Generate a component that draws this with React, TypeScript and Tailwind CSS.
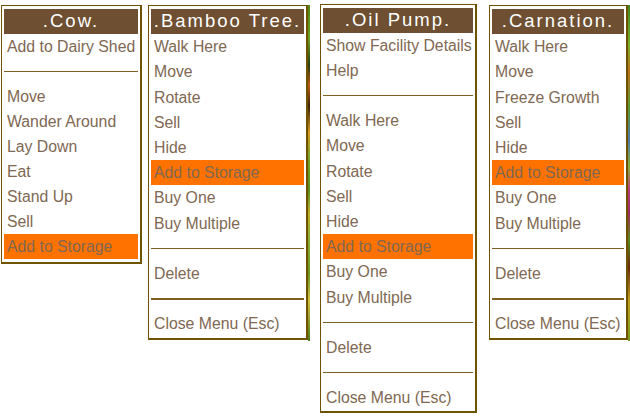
import React from "react";

type Item = { t: string; kind?: "item" | "sep" | "thick"; hi?: boolean; h?: number };

const I = (t: string, hi = false, h = 25): Item => ({ t, hi, kind: "item", h });
const S: Item = { t: "", kind: "sep" };
const T: Item = { t: "", kind: "thick" };

function Panel({
  title,
  items,
  className,
}: {
  title: string;
  items: Item[];
  className: string;
}) {
  return (
    <div
      className={
        "bg-white border-[#6f5300] border-t border-l border-r-2 border-b-2 px-[2px] pt-[3px] " +
        className
      }
    >
      <div className="h-[25px] bg-[#6e4f31] flex items-center justify-center text-white text-[18.5px] tracking-[2px] leading-none whitespace-nowrap [font-family:'Liberation_Sans',Arial,sans-serif]">
        {title}
      </div>
      {items.map((it, i) =>
        it.kind === "sep" ? (
          <div key={i} className="h-[25px] flex items-center">
            <div className="h-px w-full bg-[#7f5f22]" />
          </div>
        ) : it.kind === "thick" ? (
          <div key={i} className="h-[25px] flex items-center">
            <div className="h-[2px] w-full bg-[#7f5f22]" />
          </div>
        ) : (
          <div
            key={i}
            className={
              (it.h === 26 ? "h-[26px] " : "h-[25px] ") +
              "flex items-center pl-[3px] text-[15.8px] leading-none whitespace-nowrap text-[#806852] [font-family:'Liberation_Sans',Arial,sans-serif] " +
              (it.hi ? "bg-[#ff7200]" : "")
            }
          >
            {it.t}
          </div>
        )
      )}
    </div>
  );
}

function Strip({ className }: { className: string }) {
  return (
    <div
      className={
        "w-[2px] bg-[linear-gradient(180deg,#4f8a1a_0%,#6aa020_10%,#2a3a10_18%,#c05a10_24%,#3a2208_30%,#d89a20_38%,#7aa828_45%,#5b8f1e_55%,#c0b030_62%,#8ab030_70%,#6b9a24_80%,#d0c040_88%,#4f7a18_100%)] " +
        className
      }
    />
  );
}

function Strip2({ className }: { className: string }) {
  return (
    <div
      className={
        "w-[2px] bg-[linear-gradient(180deg,#3f8a20_0%,#7ab030_12%,#c07020_20%,#5a9a30_30%,#4a7ab0_40%,#8ab040_48%,#c03a80_55%,#a02a60_62%,#5a8a20_70%,#6a2a10_78%,#c0a020_88%,#7a9a20_100%)] " +
        className
      }
    />
  );
}

export default function App() {
  return (
    <div className="w-[630px] h-[417px] bg-white flex items-start overflow-hidden">
      <Panel
        title=".Cow."
        className="ml-[1px] mt-[5px] w-[141px] pb-[3px]"
        items={[
          I("Add to Dairy Shed"),
          S,
          I("Move"),
          I("Wander Around"),
          I("Lay Down"),
          I("Eat"),
          I("Stand Up"),
          I("Sell"),
          I("Add to Storage", true),
        ]}
      />
      <Panel
        title=".Bamboo Tree."
        className="ml-[6px] mt-[5px] w-[160px] pb-[1px]"
        items={[
          I("Walk Here"),
          I("Move", false, 26),
          I("Rotate"),
          I("Sell"),
          I("Hide"),
          I("Add to Storage", true),
          I("Buy One", false, 26),
          I("Buy Multiple"),
          S,
          I("Delete"),
          T,
          I("Close Menu (Esc)", false, 26),
        ]}
      />
      <Strip className="mt-[5px] h-[336px]" />
      <Panel
        title=".Oil Pump."
        className="ml-[10px] mt-[4px] w-[157px] pb-[1px]"
        items={[
          I("Show Facility Details"),
          I("Help"),
          S,
          I("Walk Here"),
          I("Move", false, 26),
          I("Rotate"),
          I("Sell"),
          I("Hide"),
          I("Add to Storage", true),
          I("Buy One", false, 26),
          I("Buy Multiple"),
          S,
          I("Delete"),
          S,
          I("Close Menu (Esc)"),
        ]}
      />
      <Panel
        title=".Carnation."
        className="ml-[12px] mt-[5px] w-[139px] pb-[1px]"
        items={[
          I("Walk Here"),
          I("Move", false, 26),
          I("Freeze Growth"),
          I("Sell"),
          I("Hide"),
          I("Add to Storage", true),
          I("Buy One", false, 26),
          I("Buy Multiple"),
          S,
          I("Delete"),
          T,
          I("Close Menu (Esc)", false, 26),
        ]}
      />
      <Strip2 className="mt-[5px] h-[336px]" />
    </div>
  );
}
